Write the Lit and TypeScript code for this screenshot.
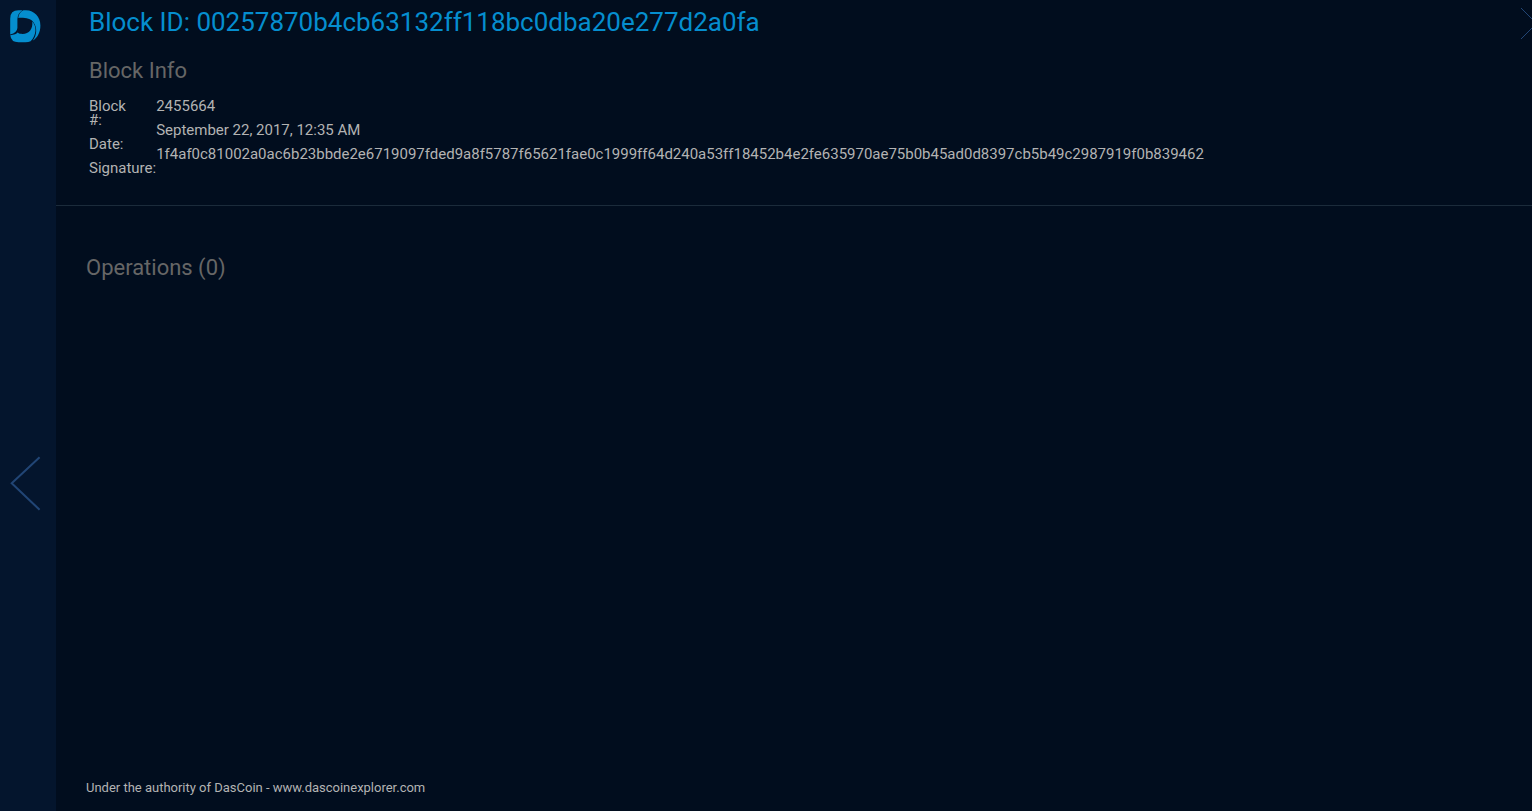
import { LitElement, css, html } from 'lit'
import { customElement, state } from 'lit/decorators.js'

class BlockField {
	constructor(public label: string, public value: string) { }
}

@customElement('side-bar')
export class SideBar extends LitElement {
	render() {
		return html`
			<svg class="logo" viewBox="0 0 31 33">
				<path d="M0.2 24.4 V8.5 Q0.2 0.2 8.5 0.2 H12.6 Q7.6 3.2 7.4 9 V18 Q7 22.9 0.2 24.4 Z" />
				<path d="M13.4 0.3 H16 C24.5 0.5 30.4 7 30.4 15.5 C30.4 22.5 27.5 27.8 22.8 30.6 C27 25 27.4 17.5 23.6 12.4 C20.4 8.4 15.5 7.6 8.3 7.9 C8.6 4.2 10.4 1.6 13.4 0.3 Z" />
				<path d="M0.3 25.2 C4.2 24.9 6.6 24 7.6 22.6 C9 23.8 10.5 24 12.5 24 C19.2 23.8 23.2 18.6 22.2 11.4 C27 16 26.6 25.2 20.6 31.2 Q18.5 32.2 15.5 32.2 H8.5 Q1 32.2 0.3 25.2 Z" />
			</svg>
			<svg class="back" viewBox="0 0 32 56">
				<path d="M30.6 1.3 L2.7 27.3 L30.6 53.8" />
			</svg>
		`;
	}

	static styles = css`
		:host {
			display: flex;
			flex-direction: column;
			box-sizing: border-box;
			width: 56px;
			flex: none;
			padding: 10px 0 0 9px;
			background-color: #04152d;
		}

		.logo {
			width: 31px;
			height: 33px;
			margin-left: 1px;
			fill: #058ecf;
		}

		.back {
			width: 32px;
			height: 56px;
			margin-top: 413px;
			fill: none;
			stroke: #214575;
			stroke-width: 2;
		}
	`
}

@customElement('app-root')
export class AppRoot extends LitElement {
	@state()
	blockId = '00257870b4cb63132ff118bc0dba20e277d2a0fa';

	@state()
	fields: BlockField[] = [
		new BlockField('Block #:', '2455664'),
		new BlockField('Date:', 'September 22, 2017, 12:35 AM'),
		new BlockField('Signature:', '1f4af0c81002a0ac6b23bbde2e6719097fded9a8f5787f65621fae0c1999ff64d240a53ff18452b4e2fe635970ae75b0b45ad0d8397cb5b49c2987919f0b839462'),
	];

	@state()
	operations: string[] = [];

	render() {
		return html`
			<side-bar></side-bar>
			<main class="content">
				<section class="block">
					<header class="top">
						<h1 class="title">Block ID: ${this.blockId}</h1>
						<svg class="next" viewBox="0 0 11 32">
							<path d="M0 0 L15.5 15.5 L0 31" />
						</svg>
					</header>
					<h2 class="heading">Block Info</h2>
					<div class="info">
						<div class="labels">
							${this.fields.map(field => html`<div class="row">${field.label}</div>`)}
						</div>
						<div class="values">
							${this.fields.map(field => html`<div class="row">${field.value}</div>`)}
						</div>
					</div>
				</section>
				<section class="operations">
					<h2 class="heading">Operations (${this.operations.length})</h2>
				</section>
				<footer class="footer">Under the authority of DasCoin - www.dascoinexplorer.com</footer>
			</main>
		`;
	}

	static styles = css`
		:host {
			display: flex;
			height: 100vh;
			overflow: hidden;
			background-color: #010d1e;
			color: #b3b3b3;
			font-family: Roboto, sans-serif;
			letter-spacing: -0.008px;
		}

		.content {
			display: flex;
			flex-direction: column;
			flex: 1;
			min-width: 0;
		}

		.block {
			box-sizing: border-box;
			height: 206px;
			padding-left: 33px;
			border-bottom: 1px solid #1b2b3b;
		}

		.top {
			display: flex;
			justify-content: space-between;
			height: 57px;
		}

		.title {
			margin: 7px 0 0;
			font-size: 26px;
			font-weight: 400;
			line-height: 30px;
			color: #058ecf;
		}

		.next {
			width: 11px;
			height: 32px;
			margin-top: 8px;
			fill: none;
			stroke: #214575;
			stroke-width: 1;
		}

		.heading {
			margin: 0;
			font-size: 22px;
			font-weight: 400;
			line-height: 28px;
			color: #666;
		}

		.info {
			display: flex;
			margin-top: 14px;
			font-size: 15px;
			line-height: 14px;
		}

		/* narrow column, so that a label of two words wraps */
		.labels {
			width: 67.2px;
			flex: none;
		}

		.labels .row {
			width: min-content;
		}

		.row {
			margin-bottom: 10px;
			white-space: normal;
		}

		.operations {
			flex: 1;
			padding: 48px 0 0 30px;
		}

		.footer {
			padding: 0 0 15px 30px;
			font-size: 13px;
			line-height: 16px;
		}
	`
}
